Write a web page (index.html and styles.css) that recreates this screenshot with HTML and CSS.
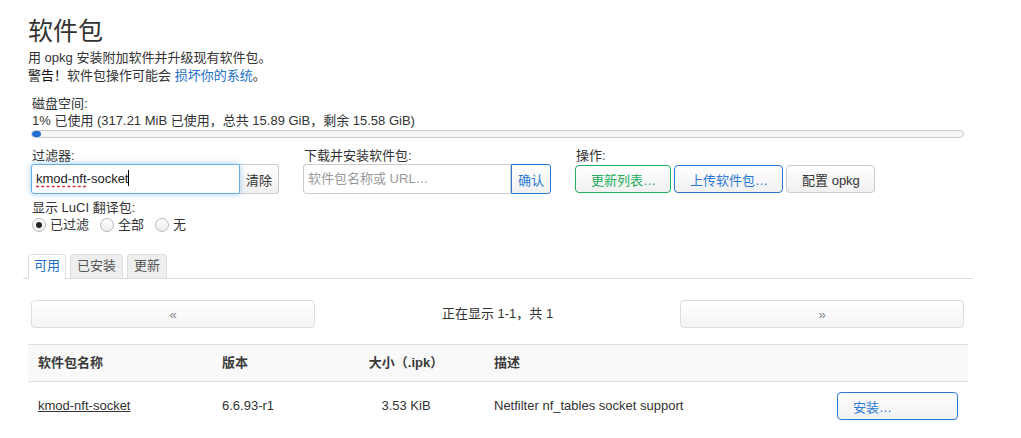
FILE: index.html
```html
<!DOCTYPE html>
<html lang="zh-CN">
<head>
    <meta charset="UTF-8">
    <meta name="viewport" content="width=device-width, initial-scale=1.0">
    <title>软件包</title>
    <link rel="stylesheet" href="styles.css">
</head>
<body>

    <h2 class="title">软件包</h2>
    <div class="intro">
        <p>用 opkg 安装附加软件并升级现有软件包。</p>
        <p><span class="warn">警告！</span>软件包操作可能会 <a href="#" class="link">损坏你的系统</a>。</p>
    </div>

    <div class="panel disk">
        <div class="label">磁盘空间:</div>
        <div class="value">1% 已使用 (317.21 MiB 已使用，总共 15.89 GiB，剩余 15.58 GiB)</div>
        <div class="bar"><div class="bar-fill" style="width: 1%"></div></div>
    </div>

    <div class="panel controls">
        <div class="control">
            <div class="label">过滤器:</div>
            <div class="group">
                <div class="text-input focused filter-input"><span class="typo">kmod-nft</span>-socket<span class="caret"></span></div>
                <button class="btn btn-addon">清除</button>
            </div>
        </div>
        <div class="control">
            <div class="label">下载并安装软件包:</div>
            <div class="group">
                <div class="text-input url-input"><span class="placeholder">软件包名称或 URL…</span></div>
                <button class="btn btn-addon btn-blue">确认</button>
            </div>
        </div>
        <div class="control">
            <div class="label">操作:</div>
            <div class="actions">
                <button class="btn btn-green">更新列表…</button>
                <button class="btn btn-blue">上传软件包…</button>
                <button class="btn">配置 opkg</button>
            </div>
        </div>
    </div>

    <div class="panel lang">
        <div class="label">显示 LuCI 翻译包:</div>
        <div class="radios">
            <span class="radio-item"><span class="radio checked"></span>已过滤</span>
            <span class="radio-item"><span class="radio"></span>全部</span>
            <span class="radio-item"><span class="radio"></span>无</span>
        </div>
    </div>

    <ul class="tabs">
        <li class="tab active">可用</li>
        <li class="tab">已安装</li>
        <li class="tab">更新</li>
    </ul>

    <div class="panel pager">
        <button class="btn pager-btn">«</button>
        <div class="pager-info">正在显示 1-1，共 1</div>
        <button class="btn pager-btn">»</button>
    </div>

    <table class="packages">
        <colgroup>
            <col class="col-name">
            <col class="col-version">
            <col class="col-size">
            <col class="col-desc">
            <col class="col-action">
        </colgroup>
        <thead>
            <tr>
                <th>软件包名称</th>
                <th>版本</th>
                <th class="center">大小（.ipk）</th>
                <th>描述</th>
                <th></th>
            </tr>
        </thead>
        <tbody>
            <tr>
                <td><a href="#" class="pkg-link">kmod-nft-socket</a></td>
                <td>6.6.93-r1</td>
                <td class="center">3.53 KiB</td>
                <td>Netfilter nf_tables socket support</td>
                <td><button class="btn btn-blue btn-install">安装…</button></td>
            </tr>
        </tbody>
    </table>

</body>
</html>
```

FILE: styles.css
```css
body {
    margin: 0;
    font-family: "Liberation Sans", "Noto Sans CJK SC", sans-serif;
    font-size: 13px;
    line-height: 18px;
    color: #333;
    background-color: white;
}
.title {
    margin: 0;
    padding: 16px 0 0 28px;
    font-size: 25px;
    line-height: 30px;
    font-weight: normal;
}
.intro {
    margin-top: 3px;
    padding-left: 28px;
}
.intro p {
    margin: 0;
}
.warn {
    color: #111;
}
.link {
    color: #2170c9;
    text-decoration: none;
}
.panel {
    margin-left: 31px;
    width: 933px;
}
.label {
    line-height: 17px;
    padding-left: 1px;
}
.disk {
    margin-top: 10px;
}
.disk .value {
    padding-left: 1px;
}
.bar {
    box-sizing: border-box;
    height: 8px;
    border: 1px solid #ccc;
    border-radius: 4px;
    background-color: #f6f6f6;
    overflow: hidden;
}
.bar-fill {
    height: 100%;
    background-color: #1f6fd0;
    border-radius: 3px;
}
.controls {
    display: flex;
    gap: 24px;
    margin-top: 9px;
}
.group {
    display: flex;
}
.text-input {
    box-sizing: border-box;
    height: 30px;
    line-height: 28px;
    padding: 0 4px;
    border: 1px solid #ccc;
    border-radius: 3px 0 0 3px;
    background-color: white;
    white-space: nowrap;
}
.focused {
    border-color: #66afe9;
    box-shadow: 0 0 6px rgba(102, 175, 233, 0.6);
    position: relative;
    z-index: 1;
}
.filter-input {
    width: 209px;
    color: #222;
}
.url-input {
    width: 208px;
}
.placeholder {
    color: #999;
}
.typo {
    text-decoration: underline dashed #e0303a;
    text-underline-offset: 3px;
}
.caret {
    display: inline-block;
    width: 1px;
    height: 16px;
    background-color: #000;
    vertical-align: -3px;
}
.btn {
    box-sizing: border-box;
    height: 28px;
    padding: 0 14px;
    border: 1px solid #ccc;
    border-radius: 4px;
    background: linear-gradient(#fff, #f0f0f0);
    color: #333;
    font-family: inherit;
    font-size: 13px;
    cursor: pointer;
}
.btn-addon {
    height: 30px;
    padding: 0 6px;
    border-radius: 0 3px 3px 0;
}
.filter-input + .btn-addon {
    border-left: none;
    padding-left: 6px;
    width: 39px;
}
.btn-blue {
    border-color: #2a7ad5;
    color: #2a7ad5;
}
.btn-green {
    border-color: #22ad5c;
    color: #22ad5c;
}
.actions {
    display: flex;
    gap: 3px;
    padding-top: 1px;
}
.actions .btn {
    padding: 0 14px 0 15px;
}
.lang {
    margin-top: 5px;
}
.radios {
    display: flex;
    line-height: 17px;
    padding-left: 1px;
}
.radio-item {
    display: inline-flex;
    align-items: center;
    margin-right: 11px;
}
.radio {
    box-sizing: border-box;
    width: 14px;
    height: 14px;
    margin-right: 4px;
    border: 1px solid #bbb;
    border-radius: 50%;
    background: linear-gradient(#fff, #ececec);
    display: inline-flex;
    align-items: center;
    justify-content: center;
}
.radio.checked::after {
    content: "";
    width: 6px;
    height: 6px;
    border-radius: 50%;
    background-color: #222;
}
.tabs {
    display: flex;
    align-items: flex-start;
    gap: 4px;
    list-style: none;
    box-sizing: border-box;
    height: 25px;
    margin: 21px 0 0 23px;
    padding: 0 0 0 5px;
    width: 950px;
    border-bottom: 1px solid #ddd;
}
.tab {
    box-sizing: border-box;
    height: 24px;
    line-height: 22px;
    padding: 0 6px;
    border: 1px solid #ddd;
    border-bottom: none;
    border-radius: 4px 4px 0 0;
    background-color: #eee;
    color: #555;
}
.tab.active {
    height: 25px;
    padding: 0 5px;
    background-color: white;
    color: #2170c9;
}
.pager {
    display: flex;
    align-items: center;
    margin-top: 21px;
}
.pager-btn {
    flex: 0 0 284px;
    border-color: #ddd;
    background: linear-gradient(#fff, #f4f4f4);
    color: #888;
}
.pager-info {
    flex: 1;
    text-align: center;
}
.packages {
    margin: 16px 0 0 28px;
    width: 940px;
    border-collapse: collapse;
    table-layout: fixed;
}
.col-name { width: 184px; }
.col-version { width: 116px; }
.col-size { width: 156px; }
.col-desc { width: 343px; }
.col-action { width: 141px; }
.packages th {
    height: 36px;
    padding: 0 10px;
    text-align: left;
    font-weight: bold;
    color: #3a3a3a;
    background-color: #f9f9f9;
    border-top: 1px solid #ddd;
    border-bottom: 1px solid #ddd;
}
.packages td {
    height: 47px;
    padding: 0 10px;
}
.packages .center {
    text-align: center;
}
.pkg-link {
    color: #333;
    text-decoration: underline;
}
.btn-install {
    width: 121px;
    text-align: left;
    padding-left: 15px;
    margin-top: 1px;
}
```
